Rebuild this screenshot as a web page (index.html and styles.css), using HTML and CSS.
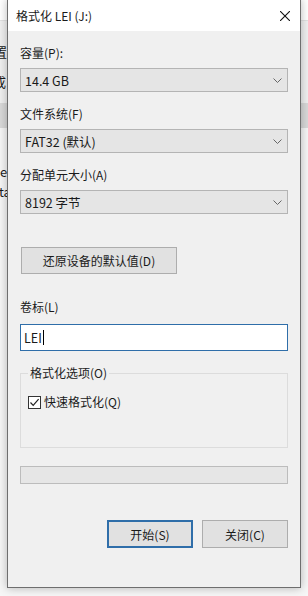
FILE: index.html
```html
<!doctype html>
<html>
<head>
<meta charset="utf-8">
<link rel="stylesheet" href="styles.css">
<title>格式化 LEI (J:)</title>
</head>
<body>
<div class="desk">
  <div class="backdrop">
    <div class="back-top"></div>
    <div class="back-upper">
      <div class="back-line zhi"><span>设置</span></div>
      <div class="back-line cheng"><span>完成</span></div>
    </div>
    <div class="back-band"></div>
    <div class="back-lower">
      <div class="back-line e"><span>e</span></div>
      <div class="back-line ta"><span>ta</span></div>
    </div>
  </div>

  <div class="dialog">
    <div class="titlebar">
      <span class="title">格式化 LEI (J:)</span>
      <svg class="close" width="10" height="10" viewBox="0 0 10 10"><path d="M0 0 L10 10 M10 0 L0 10" stroke="#111" stroke-width="1.1" fill="none"/></svg>
    </div>

    <div class="content">
      <div class="field">
        <div class="label">容量(P):</div>
        <div class="combo"><span>14.4 GB</span><svg width="9" height="5" viewBox="0 0 9 5"><polyline points="0.5,0.5 4.5,4.5 8.5,0.5" stroke="#666" fill="none"/></svg></div>
      </div>
      <div class="field">
        <div class="label">文件系统(F)</div>
        <div class="combo"><span>FAT32 (默认)</span><svg width="9" height="5" viewBox="0 0 9 5"><polyline points="0.5,0.5 4.5,4.5 8.5,0.5" stroke="#666" fill="none"/></svg></div>
      </div>
      <div class="field">
        <div class="label">分配单元大小(A)</div>
        <div class="combo"><span>8192 字节</span><svg width="9" height="5" viewBox="0 0 9 5"><polyline points="0.5,0.5 4.5,4.5 8.5,0.5" stroke="#666" fill="none"/></svg></div>
      </div>

      <button class="btn restore">还原设备的默认值(D)</button>

      <div class="label vol">卷标(L)</div>
      <div class="textbox"><span>LEI</span><i class="caret"></i></div>

      <fieldset class="group">
        <legend>格式化选项(O)</legend>
        <div class="check">
          <span class="box"><svg width="11" height="11" viewBox="0 0 11 11"><polyline points="1.5,5.5 4.2,8.4 9.6,2.2" stroke="#222" stroke-width="1.2" fill="none"/></svg></span>
          <span>快速格式化(Q)</span>
        </div>
      </fieldset>

      <div class="progress"></div>

      <div class="actions">
        <button class="btn primary">开始(S)</button>
        <button class="btn">关闭(C)</button>
      </div>
    </div>
  </div>
</div>
</body>
</html>
```

FILE: styles.css
```css
html, body {
    margin: 0;
    padding: 0;
}
body {
    font-family: "Noto Sans CJK SC", "Noto Sans", sans-serif;
    font-size: 12px;
    color: #1a1a1a;
    background: #fff;
}
.desk {
    position: relative;
    width: 308px;
    height: 596px;
    overflow: hidden;
}

/* window behind the dialog */
.backdrop {
    display: flex;
    flex-direction: column;
    height: 100%;
}
.back-top {
    height: 20px;
    background: #fff;
    border-bottom: 1px solid #e2e2e2;
}
.back-upper {
    height: 82px;
    background: #f0f0f0;
}
.back-band {
    height: 25px;
    background: #d9d9d9;
}
.back-lower {
    flex: 1;
    background: #f6f6f6;
}
.back-line {
    height: 16px;
    line-height: 16px;
    font-size: 13px;
    white-space: nowrap;
}
.back-line.zhi {
    margin: 23px 0 0 -19px;
}
.back-line.cheng {
    margin: 14px 0 0 -20px;
}
.back-line.e {
    margin: 36px 0 0 0;
}
.back-line.ta {
    margin: 4px 0 0 -1px;
}

/* the format dialog */
.dialog {
    position: absolute;
    left: 7px;
    top: -1px;
    width: 294px;
    height: 589px;
    box-sizing: border-box;
    border: 1px solid #6e6e6e;
    background: #f0f0f0;
    box-shadow: 0 0 9px rgba(0, 0, 0, 0.28);
    display: flex;
    flex-direction: column;
}
.titlebar {
    height: 31px;
    background: #fff;
    display: flex;
    align-items: center;
    justify-content: space-between;
    padding: 0 10px 0 8px;
}
.title {
    line-height: 16px;
}
.content {
    padding: 14px 12px 0 12px;
    display: flex;
    flex-direction: column;
}
.label {
    line-height: 16px;
}
.field {
    margin-bottom: 14px;
}
.field .label {
    margin-bottom: 7px;
}
.combo {
    height: 24px;
    box-sizing: border-box;
    border: 1px solid #b4b4b4;
    background: #e5e5e5;
    display: flex;
    align-items: center;
    justify-content: space-between;
    padding: 0 5px 0 4px;
    font-size: 12.5px;
}

.btn {
    font-family: inherit;
    font-size: 12px;
    color: #1a1a1a;
    height: 28px;
    box-sizing: border-box;
    border: 1px solid #adadad;
    background: #e1e1e1;
    padding: 0;
}
.restore {
    margin: 19px 0 0 1px;
    width: 156px;
    height: 27px;
}
.label.vol {
    margin-top: 25px;
}
.textbox {
    margin-top: 9px;
    height: 27px;
    box-sizing: border-box;
    border: 1px solid #2f6ea9;
    background: #fff;
    display: flex;
    align-items: center;
    padding: 0 3px;
    font-size: 12.5px;
}
.caret {
    display: block;
    width: 1px;
    height: 15px;
    background: #000;
    margin-left: 1px;
}

.group {
    margin: 14px 0 0 0;
    padding: 0 0 37px 7px;
    border: 1px solid #dcdcdc;
    min-width: 0;
}
.group legend {
    padding: 0 2px;
    line-height: 16px;
    color: #222;
}
.check {
    margin-top: 13px;
    display: flex;
    align-items: center;
    gap: 3px;
    line-height: 16px;
}
.box {
    width: 13px;
    height: 13px;
    box-sizing: border-box;
    border: 1px solid #333;
    background: #fff;
    display: flex;
    align-items: center;
    justify-content: center;
}
.box svg {
    display: block;
}

.progress {
    margin-top: 18px;
    height: 18px;
    box-sizing: border-box;
    border: 1px solid #bcbcbc;
    background: #e6e6e6;
}

.actions {
    margin-top: 36px;
    display: flex;
    justify-content: flex-end;
    gap: 9px;
}
.actions .btn {
    width: 86px;
}
.btn.primary {
    border: 2px solid #2f6ea9;
}
```
